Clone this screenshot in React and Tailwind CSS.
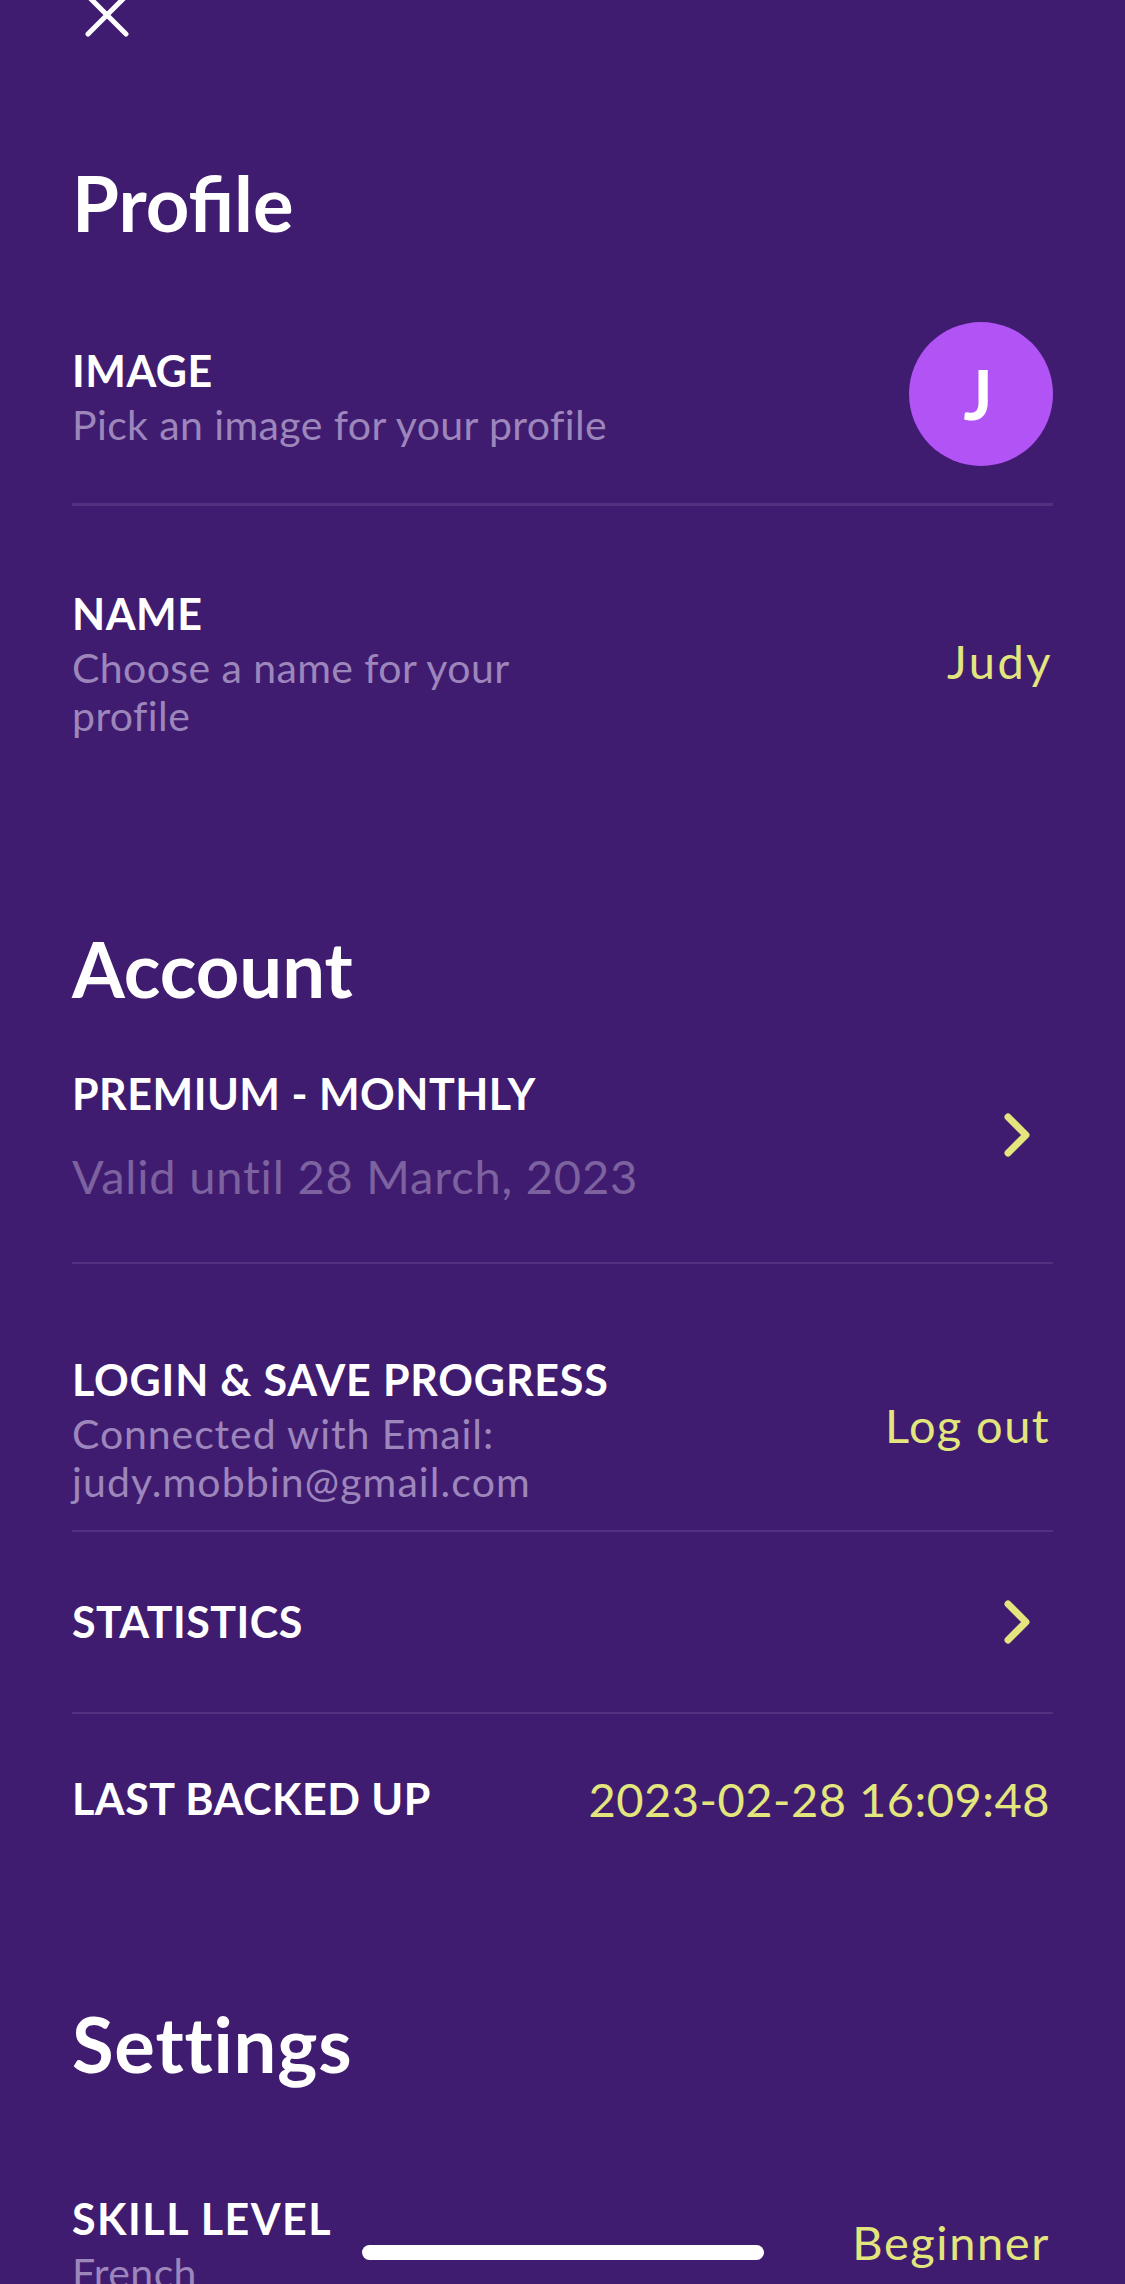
import { ChevronRight } from "lucide-react";

function Label({ children, className = "mb-[6px] tracking-[0.5px]" }) {
  return <p className={`text-[43px] leading-[48px] font-bold text-white ${className}`}>{children}</p>;
}

function Sub({ children, className = "tracking-[0.4px]" }) {
  return <p className={`text-[41px] leading-[48px] text-[#9d86bb] ${className}`}>{children}</p>;
}

function Value({ children, className }) {
  return <span className={`text-[47px] leading-[52px] text-[#e3e67d] ${className}`}>{children}</span>;
}

function Chevron() {
  return <ChevronRight className="text-[#e3e67d]" size={72} strokeWidth={2.3} />;
}

function Heading({ children, className = "" }) {
  return <h2 className={`text-[76px] leading-[80px] font-bold text-white ${className}`}>{children}</h2>;
}

export default function App() {
  return (
    <div className="relative h-[2284px] w-[1125px] overflow-hidden bg-[#401c70] font-['Lato',sans-serif]">
      <div className="px-[72px]">
        <svg className="mt-[-7px] ml-[13px] block" width="44" height="44" viewBox="0 0 44 44" fill="none" stroke="white" strokeWidth="5" strokeLinecap="round">
          <path d="M3 3 L41 41 M41 3 L3 41" />
        </svg>

        <div className="mt-[126px]">
          <Heading>Profile</Heading>
        </div>

        <div className="mt-[79px] flex h-[184px] items-start justify-between border-b-[3px] border-[#553080]">
          <div className="pt-[25px]">
            <Label>IMAGE</Label>
            <Sub>Pick an image for your profile</Sub>
          </div>
          <div className="flex h-[144px] w-[144px] items-center justify-center rounded-full bg-[#b253f5] pr-[6px] text-[68px] font-bold text-white">
            J
          </div>
        </div>

        <div className="flex items-start justify-between pt-[84px]">
          <div className="w-[500px]">
            <Label>NAME</Label>
            <Sub>Choose a name for your profile</Sub>
          </div>
          <div className="pt-[45px]">
            <Value className="tracking-[2.5px]">Judy</Value>
          </div>
        </div>

        <div className="mt-[189px]">
          <Heading>Account</Heading>
        </div>

        <div className="mt-[61px] flex h-[194px] items-start justify-between border-b-[2px] border-[#553080]">
          <div>
            <Label>PREMIUM - MONTHLY</Label>
            <p className="mt-[32px] text-[47px] leading-[52px] tracking-[0.8px] text-[#7d62a0]">Valid until 28 March, 2023</p>
          </div>
          <div className="pt-[29px]">
            <Chevron />
          </div>
        </div>

        <div className="flex h-[268px] items-start justify-between border-b-[2px] border-[#553080] pt-[92px]">
          <div>
            <Label className="mb-[6px] tracking-[0.8px]">LOGIN &amp; SAVE PROGRESS</Label>
            <Sub className="tracking-[0.9px]">Connected with Email:</Sub>
            <Sub className="tracking-[1.1px]">judy.mobbin@gmail.com</Sub>
          </div>
          <div className="pt-[43px]">
            <Value className="mr-[3px] tracking-[1.4px]">Log out</Value>
          </div>
        </div>

        <div className="flex h-[182px] items-center justify-between border-b-[2px] border-[#553080]">
          <Label className="tracking-[0.5px]">STATISTICS</Label>
          <Chevron />
        </div>

        <div className="flex h-[170px] items-center justify-between">
          <Label className="tracking-[0.5px]">LAST BACKED UP</Label>
          <Value className="mr-[3px] tracking-[0.5px]">2023-02-28 16:09:48</Value>
        </div>

        <div className="mt-[120px]">
          <Heading className="tracking-[0.8px]">Settings</Heading>
        </div>

        <div className="mt-[111px] flex items-start justify-between">
          <div>
            <Label className="mb-[6px] tracking-[1.5px]">SKILL LEVEL</Label>
            <Sub>French</Sub>
          </div>
          <div className="pt-[21px]">
            <Value className="mr-[3px] tracking-[1.6px]">Beginner</Value>
          </div>
        </div>
      </div>

      <div className="absolute bottom-[24px] left-[362px] h-[15px] w-[402px] rounded-full bg-white" />
    </div>
  );
}
